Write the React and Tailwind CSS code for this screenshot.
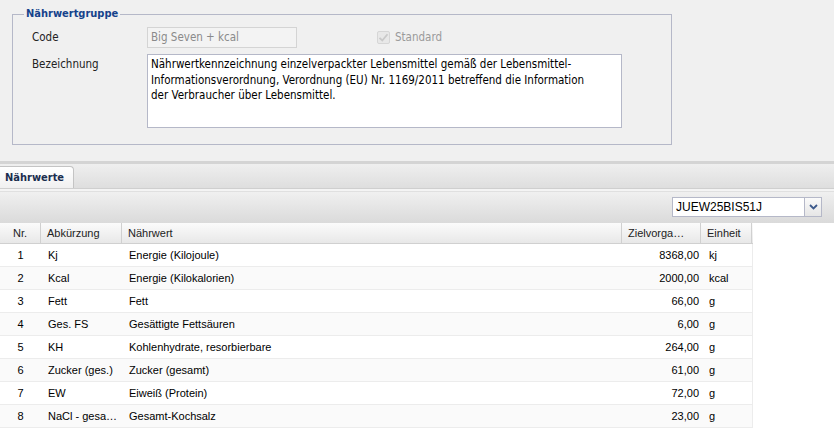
import React from "react";

const rows = [
  ["1", "Kj", "Energie (Kilojoule)", "8368,00", "kj"],
  ["2", "Kcal", "Energie (Kilokalorien)", "2000,00", "kcal"],
  ["3", "Fett", "Fett", "66,00", "g"],
  ["4", "Ges. FS", "Gesättigte Fettsäuren", "6,00", "g"],
  ["5", "KH", "Kohlenhydrate, resorbierbare", "264,00", "g"],
  ["6", "Zucker (ges.)", "Zucker (gesamt)", "61,00", "g"],
  ["7", "EW", "Eiweiß (Protein)", "72,00", "g"],
  ["8", "NaCl - gesamt", "Gesamt-Kochsalz", "23,00", "g"],
];

const tah = { fontFamily: '"DejaVu Sans Condensed", "Liberation Sans", sans-serif' };

export default function App() {
  return (
    <div
      className="w-[834px] h-[437px] bg-white overflow-hidden text-black"
      style={{ fontFamily: '"Liberation Sans", Arial, sans-serif' }}
    >
      {/* Form area */}
      <div className="h-[161px] bg-[#f0f0f0] pt-[7px] pl-[12px]" style={tah}>
        <fieldset className="w-[660px] h-[138px] border border-[#b5b8c8] px-[10px] m-0">
          <legend className="px-[2px] ml-[1px] h-[14px] leading-[14px] text-[11px] font-bold text-[#15428b]">
            Nährwertgruppe
          </legend>
          <div className="flex items-center mt-[6px] h-[21px]">
            <div className="w-[124px] pl-[9px] text-[11.5px] text-[#222]">Code</div>
            <div className="w-[150px] h-[21px] border border-[#d4d4d4] bg-[#f3f3f3] px-[3px] text-[11.5px] leading-[19px] text-[#8a8a8a]">
              Big Seven + kcal
            </div>
            <div className="ml-[80px] flex items-center gap-[5px]">
              <span className="w-[13px] h-[13px] rounded-[2px] border border-[#d6d6d6] bg-[#e8e8e8] flex items-center justify-center">
                <svg width="11" height="11" viewBox="0 0 11 11">
                  <path d="M1.5 5.8 L4.3 8.5 L9.5 2.2" fill="none" stroke="#c9c9c9" strokeWidth="1.8" />
                </svg>
              </span>
              <span className="text-[11.5px] text-[#9a9a9a]">Standard</span>
            </div>
          </div>
          <div className="flex mt-[6px]">
            <div className="w-[124px] pl-[9px] pt-[3px] text-[11.5px] leading-[15px] text-[#222]">Bezeichnung</div>
            <div className="w-[475px] h-[74px] border border-[#b5b8c8] bg-white px-[3px] pt-[2px] text-[11.5px] leading-[15.5px]">
              Nährwertkennzeichnung einzelverpackter Lebensmittel gemäß der Lebensmittel-
              <br />
              Informationsverordnung, Verordnung (EU) Nr. 1169/2011 betreffend die Information
              <br />
              der Verbraucher über Lebensmittel.
            </div>
          </div>
        </fieldset>
      </div>

      {/* splitter */}
      <div className="h-[3px] bg-[#d4d4d4]" />

      {/* tab strip */}
      <div className="h-[25px] bg-gradient-to-b from-[#efefef] to-[#dedede] flex items-end border-b border-[#cfcfcf]">
        <div
          className="w-[74px] h-[22px] rounded-tr-[4px] border-t border-r border-[#c4c4c4] bg-gradient-to-b from-white to-[#f0f0f0] pl-[5px] text-[11px] font-bold leading-[21px] text-[#1a2d4e]"
          style={tah}
        >
          Nährwerte
        </div>
      </div>
      <div className="h-[3px] bg-[#f4f4f4] border-b border-[#e0e0e0]" />

      {/* toolbar */}
      <div className="h-[31px] bg-gradient-to-b from-[#f0f0f0] to-[#dadada] flex items-start justify-end pr-[12px] pt-[5px]">
        <div className="flex w-[150px] h-[20px] border border-[#b5b8c8] bg-white">
          <div className="flex-1 pl-[3px] text-[12px] leading-[18px]">JUEW25BIS51J</div>
          <div className="w-[17px] h-full border-l border-[#b5b8c8] bg-gradient-to-b from-[#fafafa] to-[#e6e6e6] flex items-center justify-center">
            <svg width="9" height="6" viewBox="0 0 9 6">
              <path d="M1 1 L4.5 4.5 L8 1" fill="none" stroke="#3d5a8c" strokeWidth="1.8" />
            </svg>
          </div>
        </div>
      </div>

      {/* grid */}
      <div className="w-[753px] text-[11px]">
        <div className="flex h-[21px] bg-gradient-to-b from-[#fbfbfb] to-[#e8e8e8] border-b border-[#d0d0d0] leading-[20px] text-[#222]">
          <div className="w-[41px] text-center border-r border-[#d0d0d0]">Nr.</div>
          <div className="w-[81px] pl-[6px] border-r border-[#d0d0d0]">Abkürzung</div>
          <div className="w-[500px] pl-[6px] border-r border-[#d0d0d0]">Nährwert</div>
          <div className="w-[79px] pl-[6px] border-r border-[#d0d0d0] whitespace-nowrap overflow-hidden">Zielvorga…</div>
          <div className="w-[51px] pl-[6px] border-r border-[#d0d0d0]">Einheit</div>
        </div>
        {rows.map((r, i) => (
          <div
            key={r[0]}
            className={`flex h-[23px] border-b border-r border-[#ececec] leading-[22px] ${i % 2 === 1 ? "bg-[#fafafa]" : "bg-white"}`}
          >
            <div className="w-[41px] text-center">{r[0]}</div>
            <div className="w-[81px] pl-[7px] pr-[4px] whitespace-nowrap overflow-hidden text-ellipsis">{r[1]}</div>
            <div className="w-[500px] pl-[7px]">{r[2]}</div>
            <div className="w-[79px] pr-[2px] text-right">{r[3]}</div>
            <div className="w-[51px] pl-[8px]">{r[4]}</div>
          </div>
        ))}
      </div>
    </div>
  );
}
